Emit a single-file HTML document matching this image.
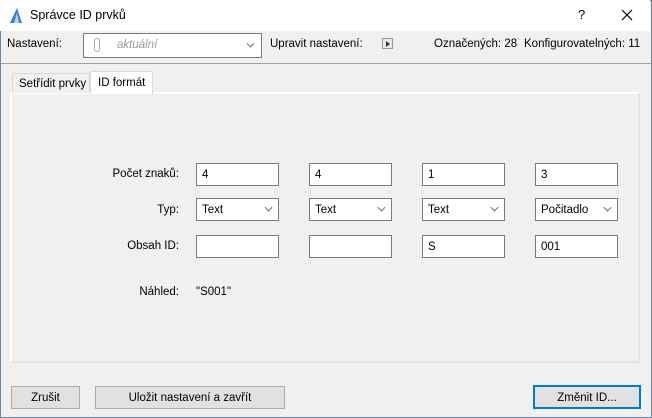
<!DOCTYPE html>
<html><head><meta charset="utf-8"><style>
*{box-sizing:border-box;margin:0;padding:0}
body{width:652px;height:418px;overflow:hidden;background:#f0f0f0;font-family:"Liberation Sans",sans-serif;font-size:11.5px;color:#000;position:relative}
.win{position:absolute;left:0;top:0;width:652px;height:418px;border:1px solid #6a87a6}
.abs{position:absolute;white-space:nowrap}
.title{position:absolute;left:0;top:0;width:650px;height:31px;background:#fff}
.box{position:absolute;background:#fff;border:1px solid #7a7a7a;height:23px;padding:5px 0 0 5px;font-size:11.5px}
.chev{position:absolute;right:6px;top:5px;width:7px;height:7px;border-right:1px solid #555;border-bottom:1px solid #555;transform:rotate(45deg) scale(.8);}
.btn{position:absolute;background:#e1e1e1;border:1px solid #adadad;height:23px;text-align:center;padding-top:5px}
.lbl{position:absolute;text-align:right;width:120px}
</style></head><body>
<div class="win"></div>
<div class="title"></div>
<svg class="abs" style="left:8px;top:7px" width="16" height="17" viewBox="0 0 16 17"><path d="M2 16 L9 1 L14 16 Z" fill="#3b7fd9"/><path d="M6 16 L9 6 L11 16Z" fill="#bcd6f5"/></svg>
<div class="abs" style="left:30px;top:8px;font-size:12.5px">Správce ID prvků</div>
<div class="abs" style="left:578px;top:7px;font-size:13px">?</div>
<svg class="abs" style="left:621px;top:9px" width="12" height="12"><path d="M1 1L11 11M11 1L1 11" stroke="#000" stroke-width="1.2"/></svg>
<div class="abs" style="left:7px;top:38px">Nastavení:</div>
<div class="box" style="left:83px;top:33px;width:179px;height:25px;padding:5px 0 0 0">
<svg class="abs" style="left:10px;top:4px" width="6" height="14"><rect x="0.5" y="0.5" width="5" height="13" rx="2.5" fill="none" stroke="#aaa"/></svg>
<span class="abs" style="left:33px;top:5px;color:#999;font-style:italic">aktuální</span><span class="chev" style="top:6px;right:7px"></span></div>
<div class="abs" style="left:270px;top:38px">Upravit nastavení:</div>
<div class="abs" style="left:382px;top:38px;width:11px;height:11px;border:1px solid #999;background:#e8e8e8"><svg style="position:absolute;left:2px;top:2px" width="6" height="6"><path d="M1 0L5 3L1 6Z" fill="#333"/></svg></div>
<div class="abs" style="left:434px;top:38px">Označených: 28</div>
<div class="abs" style="left:524px;top:38px">Konfigurovatelných: 11</div>
<div class="abs" style="left:1px;top:63px;width:650px;height:1px;background:#a0a0a0"></div>
<div class="abs" style="left:10px;top:92px;width:630px;height:271px;border:2px solid #fff;border-right-color:#e3e3e3;border-bottom-color:#e3e3e3;background:#f0f0f0"></div>
<div class="abs" style="left:12px;top:73px;width:78px;height:20px;border:1px solid #dadada;border-bottom:none;background:#f0f0f0;padding:4px 0 0 6px">Setřídit prvky</div>
<div class="abs" style="left:90px;top:71px;width:63px;height:23px;border:1px solid #dadada;border-bottom:none;background:#fff;padding:5px 0 0 7px">ID formát</div>
<div class="lbl" style="left:59px;top:168px">Počet znaků:</div>
<div class="lbl" style="left:59px;top:204px">Typ:</div>
<div class="lbl" style="left:59px;top:240px">Obsah ID:</div>
<div class="lbl" style="left:59px;top:286px">Náhled:</div>
<div class="abs" style="left:196px;top:286px">"S001"</div>
<div class="box" style="left:196px;top:163px;width:83px">4</div>
<div class="box" style="left:309px;top:163px;width:83px">4</div>
<div class="box" style="left:422px;top:163px;width:83px">1</div>
<div class="box" style="left:535px;top:163px;width:83px">3</div>
<div class="box" style="left:196px;top:198px;width:83px">Text<span class="chev"></span></div>
<div class="box" style="left:309px;top:198px;width:83px">Text<span class="chev"></span></div>
<div class="box" style="left:422px;top:198px;width:83px">Text<span class="chev"></span></div>
<div class="box" style="left:535px;top:198px;width:83px">Počitadlo<span class="chev"></span></div>
<div class="box" style="left:196px;top:235px;width:83px"></div>
<div class="box" style="left:309px;top:235px;width:83px"></div>
<div class="box" style="left:422px;top:235px;width:83px">S</div>
<div class="box" style="left:535px;top:235px;width:83px">001</div>
<div class="btn" style="left:11px;top:386px;width:69px">Zrušit</div>
<div class="btn" style="left:95px;top:386px;width:190px">Uložit nastavení a zavřít</div>
<div class="btn" style="left:533px;top:385px;width:108px;height:24px;border:2px solid #0078d7">Změnit ID...</div>
</body></html>
